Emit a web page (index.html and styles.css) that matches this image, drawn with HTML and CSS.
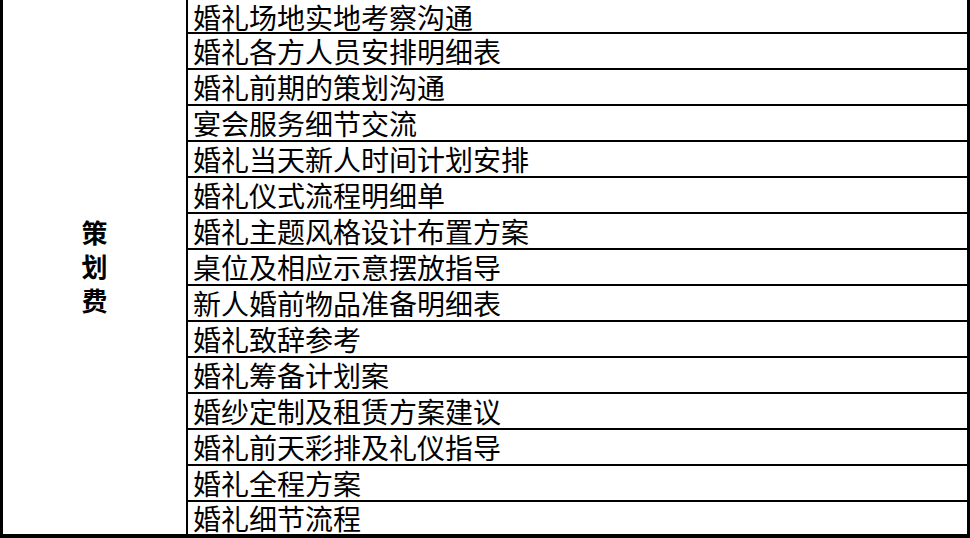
FILE: index.html
```html
<!DOCTYPE html>
<html lang="zh-CN">
<head>
<meta charset="utf-8">
<title>策划费</title>
<link rel="stylesheet" href="styles.css">
</head>
<body>
<div class="sheet">
  <div class="label-cell"><span class="label">策<br>划<br>费</span></div>
  <div class="items">
    <div class="row first">婚礼场地实地考察沟通</div>
    <div class="row">婚礼各方人员安排明细表</div>
    <div class="row">婚礼前期的策划沟通</div>
    <div class="row">宴会服务细节交流</div>
    <div class="row">婚礼当天新人时间计划安排</div>
    <div class="row">婚礼仪式流程明细单</div>
    <div class="row">婚礼主题风格设计布置方案</div>
    <div class="row">桌位及相应示意摆放指导</div>
    <div class="row">新人婚前物品准备明细表</div>
    <div class="row">婚礼致辞参考</div>
    <div class="row">婚礼筹备计划案</div>
    <div class="row">婚纱定制及租赁方案建议</div>
    <div class="row">婚礼前天彩排及礼仪指导</div>
    <div class="row">婚礼全程方案</div>
    <div class="row last">婚礼细节流程</div>
  </div>
</div>
</body>
</html>
```

FILE: styles.css
```css
html, body {
  margin: 0;
  padding: 0;
  background: #ffffff;
}

body {
  width: 970px;
  height: 538px;
  overflow: hidden;
  font-family: "Noto Sans CJK SC", "Noto Sans", sans-serif;
  color: #000000;
}

.sheet {
  box-sizing: border-box;
  width: 970px;
  height: 538px;
  display: flex;
  border-left: 3px solid #000;
  border-right: 3px solid #000;
  border-bottom: 4px solid #000;
}

.label-cell {
  width: 183px;
  flex: none;
  border-right: 2px solid #000;
  display: flex;
  align-items: center;
  justify-content: center;
}

.label {
  font-size: 26px;
  font-weight: 700;
  line-height: 34px;
  text-align: center;
  margin-top: -2px;
}

.items {
  flex: 1;
  display: flex;
  flex-direction: column;
}

.row {
  height: 34px;
  line-height: 34px;
  border-top: 2px solid #000;
  font-size: 28px;
  padding-left: 5px;
  white-space: nowrap;
}

.row.first {
  border-top: none;
  height: 32px;
  line-height: 34px;
}

.row.last {
  height: 32px;
  line-height: 32px;
}
```
